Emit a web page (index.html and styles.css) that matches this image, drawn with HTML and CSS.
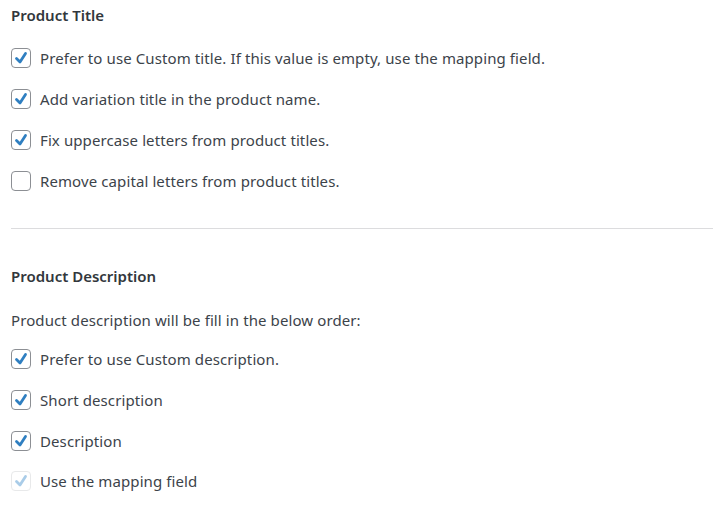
FILE: index.html
```html
<!DOCTYPE html>
<html>
<head>
<meta charset="utf-8">
<link rel="stylesheet" href="styles.css">
</head>
<body>
<div class="page">
  <section class="section">
    <h2 class="heading">Product Title</h2>
    <div class="options">
      <label class="option"><span class="box"><svg class="check" viewBox="0 0 18 18"><polyline points="4.5,9.5 8,13 13.5,4.5"/></svg></span><span class="text">Prefer to use Custom title. If this value is empty, use the mapping field.</span></label>
      <label class="option"><span class="box"><svg class="check" viewBox="0 0 18 18"><polyline points="4.5,9.5 8,13 13.5,4.5"/></svg></span><span class="text">Add variation title in the product name.</span></label>
      <label class="option"><span class="box"><svg class="check" viewBox="0 0 18 18"><polyline points="4.5,9.5 8,13 13.5,4.5"/></svg></span><span class="text">Fix uppercase letters from product titles.</span></label>
      <label class="option"><span class="box"></span><span class="text">Remove capital letters from product titles.</span></label>
    </div>
  </section>
  <hr class="divider">
  <section class="section">
    <h2 class="heading heading-second">Product Description</h2>
    <p class="intro">Product description will be fill in the below order:</p>
    <div class="options options-second">
      <label class="option"><span class="box"><svg class="check" viewBox="0 0 18 18"><polyline points="4.5,9.5 8,13 13.5,4.5"/></svg></span><span class="text">Prefer to use Custom description.</span></label>
      <label class="option"><span class="box"><svg class="check" viewBox="0 0 18 18"><polyline points="4.5,9.5 8,13 13.5,4.5"/></svg></span><span class="text">Short description</span></label>
      <label class="option"><span class="box"><svg class="check" viewBox="0 0 18 18"><polyline points="4.5,9.5 8,13 13.5,4.5"/></svg></span><span class="text">Description</span></label>
      <label class="option"><span class="box disabled"><svg class="check" viewBox="0 0 18 18"><polyline points="4.5,9.5 8,13 13.5,4.5"/></svg></span><span class="text">Use the mapping field</span></label>
    </div>
  </section>
</div>
</body>
</html>
```
FILE: styles.css
```css
html, body {
  margin: 0;
  padding: 0;
  background: #ffffff;
}
.page {
  padding: 5px 0 0 11px;
  font-family: "Noto Sans", "Open Sans", sans-serif;
  font-size: 15px;
  letter-spacing: 0.1px;
  color: #3c434a;
}
.heading {
  margin: 0;
  font-size: 15px;
  line-height: 20px;
  font-weight: 600;
  letter-spacing: 0;
  color: #32373c;
}
.heading-second {
  margin-top: 37px;
}
.options {
  margin-top: 12px;
}
.options-second {
  margin-top: 9px;
}
.option {
  display: flex;
  align-items: center;
  height: 41px;
}
.options-second .option {
  height: 40.7px;
}
.box {
  box-sizing: border-box;
  width: 20px;
  height: 20px;
  border: 1px solid #8c8f94;
  border-radius: 4px;
  margin-right: 9px;
  flex: none;
  display: flex;
}
.check {
  width: 18px;
  height: 18px;
  fill: none;
  stroke: #2f7fc1;
  stroke-width: 2.8;
  stroke-linecap: round;
  stroke-linejoin: round;
}
.box.disabled {
  border-color: #e8e9ea;
}
.box.disabled .check {
  stroke: #a9cce8;
}
.text {
  line-height: 20px;
}
.divider {
  margin: 27px 0 0 0;
  border: 0;
  border-top: 1px solid #dcdcde;
}
.intro {
  margin: 24px 0 0 0;
  line-height: 20px;
}
```
